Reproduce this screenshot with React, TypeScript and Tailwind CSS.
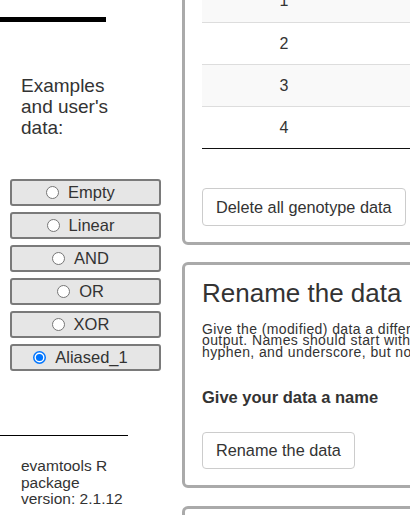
import React from "react";

const examples = ["Empty", "Linear", "AND", "OR", "XOR", "Aliased_1"];

function Radio({ checked }: { checked?: boolean }) {
  return (
    <svg width="13" height="13" viewBox="0 0 13 13" className="shrink-0">
      {checked ? (
        <>
          <circle cx="6.5" cy="6.5" r="5.75" fill="white" stroke="#0075ff" strokeWidth="1.5" />
          <circle cx="6.5" cy="6.5" r="3.6" fill="#0075ff" />
        </>
      ) : (
        <circle cx="6.5" cy="6.5" r="6" fill="white" stroke="#767676" strokeWidth="1" />
      )}
    </svg>
  );
}

function ExampleButton({ label, selected }: { label: string; selected?: boolean }) {
  return (
    <div className="flex h-[27px] w-[151px] items-center justify-center gap-[9px] rounded-[3px] border-2 border-[#7a7a7a] bg-[#e6e6e6] pr-[10px] text-[16.5px] text-[#333]">
      <Radio checked={selected} />
      <span>{label}</span>
    </div>
  );
}

export default function App() {
  return (
    <div className="flex h-[515px] w-[410px] overflow-hidden bg-white font-['Liberation_Sans',Arial,sans-serif] text-[#333]">
      {/* sidebar */}
      <div className="flex w-[182px] shrink-0 flex-col">
        <div className="mt-[17px] h-[5px] w-[106px] bg-black" />
        <div className="ml-[21px] mt-[53px] text-[19px] leading-[21px]">
          Examples
          <br />
          and user's
          <br />
          data:
        </div>
        <div className="ml-[10px] mt-[41px] flex flex-col gap-[6px]">
          {examples.map((e) => (
            <ExampleButton key={e} label={e} selected={e === "Aliased_1"} />
          ))}
        </div>
        <div className="mt-[64px] h-px w-[128px] bg-black" />
        <div className="ml-[21px] mt-[22px] text-[15.5px] leading-[16.5px]">
          evamtools R
          <br />
          package
          <br />
          version: 2.1.12
        </div>
      </div>

      {/* main */}
      <div className="flex w-[330px] shrink-0 flex-col">
        <div className="-mt-[40px] rounded-[6px] border-[3px] border-[#aaa] px-[17px] pb-[16px] pt-[17px]">
          <div className="w-[300px] border-b border-[#111] text-[16px]">
            {[1, 2, 3, 4].map((n) => (
              <div
                key={n}
                className={`flex h-[42px] items-center ${n > 1 ? "border-t border-[#ddd]" : ""} ${
                  n % 2 === 1 ? "bg-[#f9f9f9]" : "bg-white"
                }`}
              >
                <span className="w-[164px] text-center">{n}</span>
              </div>
            ))}
          </div>
          <button className="mt-[39px] h-[38px] rounded-[4px] border border-[#ccc] bg-white px-[13px] text-[16.3px] text-[#333]">
            Delete all genotype data
          </button>
        </div>

        <div className="mt-[17px] rounded-[6px] border-[3px] border-[#aaa] px-[17px] pb-[16px] pt-[14px]">
          <h2 className="whitespace-nowrap text-[26px] leading-[28.6px] font-normal">Rename the data</h2>
          <p className="mt-[16px] whitespace-nowrap text-[14px] leading-[11.5px] tracking-[0.4px]">
            Give the (modified) data a different name that will be used in the output.
            <br />
            output. Names should start with a letter and may contain letters, numbers,
            <br />
            hyphen, and underscore, but no other characters.
          </p>
          <div className="mt-[29px] text-[16.5px] font-bold leading-[20px]">Give your data a name</div>
          <button className="mt-[25px] h-[37px] rounded-[4px] border border-[#ccc] bg-white px-[13px] text-[16.3px] text-[#333]">
            Rename the data
          </button>
        </div>

        <div className="mt-[18px] h-[60px] shrink-0 rounded-[6px] border-[3px] border-[#aaa]" />
      </div>
    </div>
  );
}
